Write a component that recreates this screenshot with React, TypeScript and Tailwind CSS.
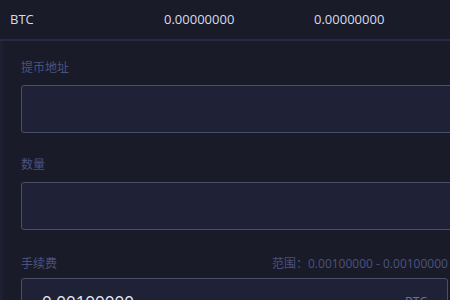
export default function App() {
  return (
    <div className="h-[300px] w-[450px] overflow-hidden bg-[#191b28] font-['Open_Sans','Noto_Sans_CJK_SC',sans-serif]">
      <div className="flex h-[39px] items-center text-[13px] text-[#d5dbef]">
        <div className="w-[150px] pl-[10px]">BTC</div>
        <div className="w-[150px] pl-[14px]">0.00000000</div>
        <div className="w-[150px] pl-[14px]">0.00000000</div>
      </div>
      <div className="h-[2px] bg-[#272a42]" />
      <div className="w-[480px] border-l-[3px] border-[#1d2030] bg-[#191b28] pl-[18px] pt-[18px]">
        <div className="text-[12px] leading-[18px] text-[#4c5280]">提币地址</div>
        <div className="mt-[8px] h-[48px] w-[460px] rounded-[3px] border border-[#4a4e66] bg-[#1f2236]" />

        <div className="mt-[23px] text-[12px] leading-[18px] text-[#4c5280]">数量</div>
        <div className="mt-[8px] h-[48px] w-[460px] rounded-[3px] border border-[#4a4e66] bg-[#1f2236]" />

        <div className="mt-[25px] flex w-[460px] items-center justify-between text-[12px] leading-[18px] text-[#4c5280]">
          <span>手续费</span>
          <span className="w-[209px] whitespace-nowrap">范围：0.00100000 - 0.00100000</span>
        </div>
        <div className="mt-[5px] flex h-[48px] w-[427px] items-center justify-between rounded-[3px] border border-[#4a4e66] bg-[#1f2236] pl-[20px] pr-[20px]">
          <span className="text-[17px] text-[#e6eaf6]">0.00100000</span>
          <span className="text-[12px] text-[#6c7290]">BTC</span>
        </div>
      </div>
    </div>
  );
}
